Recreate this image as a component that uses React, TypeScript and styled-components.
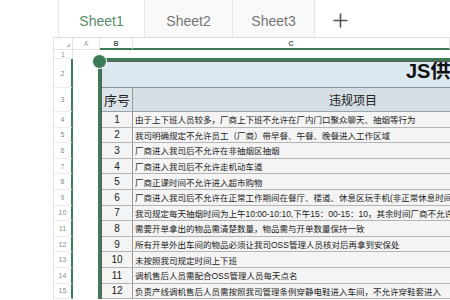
import styled, { createGlobalStyle } from 'styled-components'

const GREEN = '#3d7b57'

const GlobalStyle = createGlobalStyle`
  html, body {
    margin: 0;
    padding: 0;
    background: #fff;
    overflow: hidden;
  }
  body {
    width: 450px;
    height: 300px;
    font-family: 'Liberation Sans', 'Noto Sans CJK SC', sans-serif;
  }
  * {
    box-sizing: border-box;
  }
`

const TabBar = styled.div`
  display: flex;
  height: 37px;
  padding-left: 58px;
`

const Tab = styled.div<{ $active?: boolean; $w: number }>`
  width: ${(p) => p.$w}px;
  display: flex;
  align-items: center;
  justify-content: center;
  padding-top: 4px;
  font-size: 14px;
  color: ${(p) => (p.$active ? '#5b8c6c' : '#767676')};
  background: ${(p) => (p.$active ? '#fff' : '#f9f9f9')};
  border-left: 1px solid #e6e6e6;
  &:nth-child(3) {
    border-right: 1px solid #e6e6e6;
  }
`

const AddTab = styled.div`
  display: flex;
  align-items: center;
  padding: 4px 0 0 18px;
  color: #555;
`

const Sheet = styled.div`
  margin-left: 53px;
  display: grid;
  grid-template-columns: 19px 27px 1fr;
  grid-template-rows: 12px 1fr;
  border-top: 1px solid #dedede;
  border-left: 1px solid #e2e2e2;
`

const HeadCell = styled.div<{ $selected?: boolean; $w?: number }>`
  position: relative;
  ${(p) => (p.$w ? `width: ${p.$w}px;` : 'flex: 1;')}
  height: 12px;
  display: flex;
  align-items: center;
  justify-content: center;
  font-size: 7px;
  font-weight: ${(p) => (p.$selected ? 700 : 400)};
  color: ${(p) => (p.$selected ? '#4d5f54' : '#a0a0a0')};
  border-right: 1px solid #e4e4e4;
  border-bottom: ${(p) => (p.$selected ? `2px solid ${GREEN}` : '1px solid #e4e4e4')};
`

const CornerMark = styled.div`
  position: absolute;
  right: 2px;
  bottom: 2px;
  width: 0;
  height: 0;
  border-left: 4px solid transparent;
  border-bottom: 4px solid #c4c4c4;
`

const HeadGroup = styled.div`
  display: flex;
`

const RowHeads = styled.div`
  display: flex;
  flex-direction: column;
`

const RowHead = styled.div<{ $h: number; $selected?: boolean }>`
  height: ${(p) => p.$h}px;
  display: flex;
  align-items: center;
  justify-content: center;
  font-size: 7px;
  color: #8a8a8a;
  border-bottom: 1px solid #ececec;
  border-right: ${(p) => (p.$selected ? `2px solid ${GREEN}` : '1px solid #e4e4e4')};
`

const ColA = styled.div`
  background: #fff;
`

const TableArea = styled.div`
  padding-top: 8px;
  margin-left: -2px;
  min-width: 0;
`

const Selection = styled.div`
  position: relative;
  border-top: 3px solid ${GREEN};
  border-left: 3px solid ${GREEN};
`

const Handle = styled.div`
  position: absolute;
  left: -9px;
  top: -7px;
  width: 15px;
  height: 15px;
  border-radius: 50%;
  background: ${GREEN};
  border: 1.5px solid #fff;
`

const Table = styled.div`
  border-top: 1px solid #5c5c5c;
  border-left: 1px solid #5c5c5c;
  overflow: hidden;
`

const TitleRow = styled.div`
  height: 26px;
  display: flex;
  align-items: flex-end;
  padding: 0 0 3px 304px;
  background: #dce8ef;
  border-bottom: 1px solid #8c959b;
  font-size: 20px;
  font-weight: 700;
  color: #111;
  white-space: nowrap;
`

const Row = styled.div<{ $h: number; $head?: boolean }>`
  display: grid;
  grid-template-columns: 31px 1fr;
  height: ${(p) => p.$h}px;
  background: ${(p) => (p.$head ? '#d5dee4' : '#f4f4f4')};
  border-bottom: 1px solid ${(p) => (p.$head ? '#9aa3a8' : '#b4b4b4')};
`

const NumCell = styled.div<{ $size: number; $head?: boolean }>`
  display: flex;
  align-items: center;
  justify-content: center;
  font-size: ${(p) => p.$size}px;
  color: #222;
  white-space: nowrap;
  background: ${(p) => (p.$head ? '#dde4e9' : 'transparent')};
  border-right: 1px solid #9a9a9a;
`

const TextCell = styled.div<{ $size: number; $indent: number }>`
  display: flex;
  align-items: center;
  padding-left: ${(p) => p.$indent}px;
  font-size: ${(p) => p.$size}px;
  color: #222;
  white-space: nowrap;
  overflow: hidden;
`

const rules = [
  '由于上下班人员较多，厂商上下班不允许在厂内门口聚众聊天、抽烟等行为',
  '我司明确规定不允许员工（厂商）带早餐、午餐、晚餐进入工作区域',
  '厂商进入我司后不允许在非抽烟区抽烟',
  '厂商进入我司后不允许走机动车道',
  '厂商正课时间不允许进入超市购物',
  '厂商进入我司后不允许在正常工作期间在餐厅、楼道、休息区玩手机(非正常休息时间',
  '我司规定每天抽烟时间为上午10:00-10:10,下午15：00-15：10，其余时间厂商不允许在',
  '需要开单拿出的物品需清楚数量，物品需与开单数量保持一致',
  '所有开单外出车间的物品必须让我司OSS管理人员核对后再拿到安保处',
  '未按照我司规定时间上下班',
  '调机售后人员需配合OSS管理人员每天点名',
  '负责产线调机售后人员需按照我司管理条例穿静电鞋进入车间，不允许穿鞋套进入',
]

const ROW_H = 15.6
const rowHeights = [9, 29, 24, ...rules.map(() => ROW_H)]

export default function App() {
  return (
    <>
      <GlobalStyle />
      <TabBar>
        <Tab $active $w={86}>Sheet1</Tab>
        <Tab $w={88}>Sheet2</Tab>
        <Tab $w={83}>Sheet3</Tab>
        <AddTab>
          <svg width="15" height="15" viewBox="0 0 15 15">
            <path d="M7.5 0.5v14M0.5 7.5h14" stroke="currentColor" strokeWidth="1.6" fill="none" />
          </svg>
        </AddTab>
      </TabBar>
      <Sheet>
        <HeadCell $w={19}>
          <CornerMark />
        </HeadCell>
        <HeadCell $w={27}>A</HeadCell>
        <HeadGroup>
          <HeadCell $selected $w={33}>B</HeadCell>
          <HeadCell $selected>C</HeadCell>
        </HeadGroup>
        <RowHeads>
          {rowHeights.map((h, i) => (
            <RowHead key={i} $h={h} $selected={i > 0}>
              {i + 1}
            </RowHead>
          ))}
        </RowHeads>
        <ColA />
        <TableArea>
          <Selection>
            <Handle />
            <Table>
              <TitleRow>JS供应商厂区管理规定</TitleRow>
              <Row $h={24} $head>
                <NumCell $size={13} $head>序号</NumCell>
                <TextCell $size={12} $indent={196}>违规项目</TextCell>
              </Row>
              {rules.map((text, i) => (
                <Row key={i} $h={ROW_H}>
                  <NumCell $size={10}>{i + 1}</NumCell>
                  <TextCell $size={8.5} $indent={2}>{text}</TextCell>
                </Row>
              ))}
            </Table>
          </Selection>
        </TableArea>
      </Sheet>
    </>
  )
}
